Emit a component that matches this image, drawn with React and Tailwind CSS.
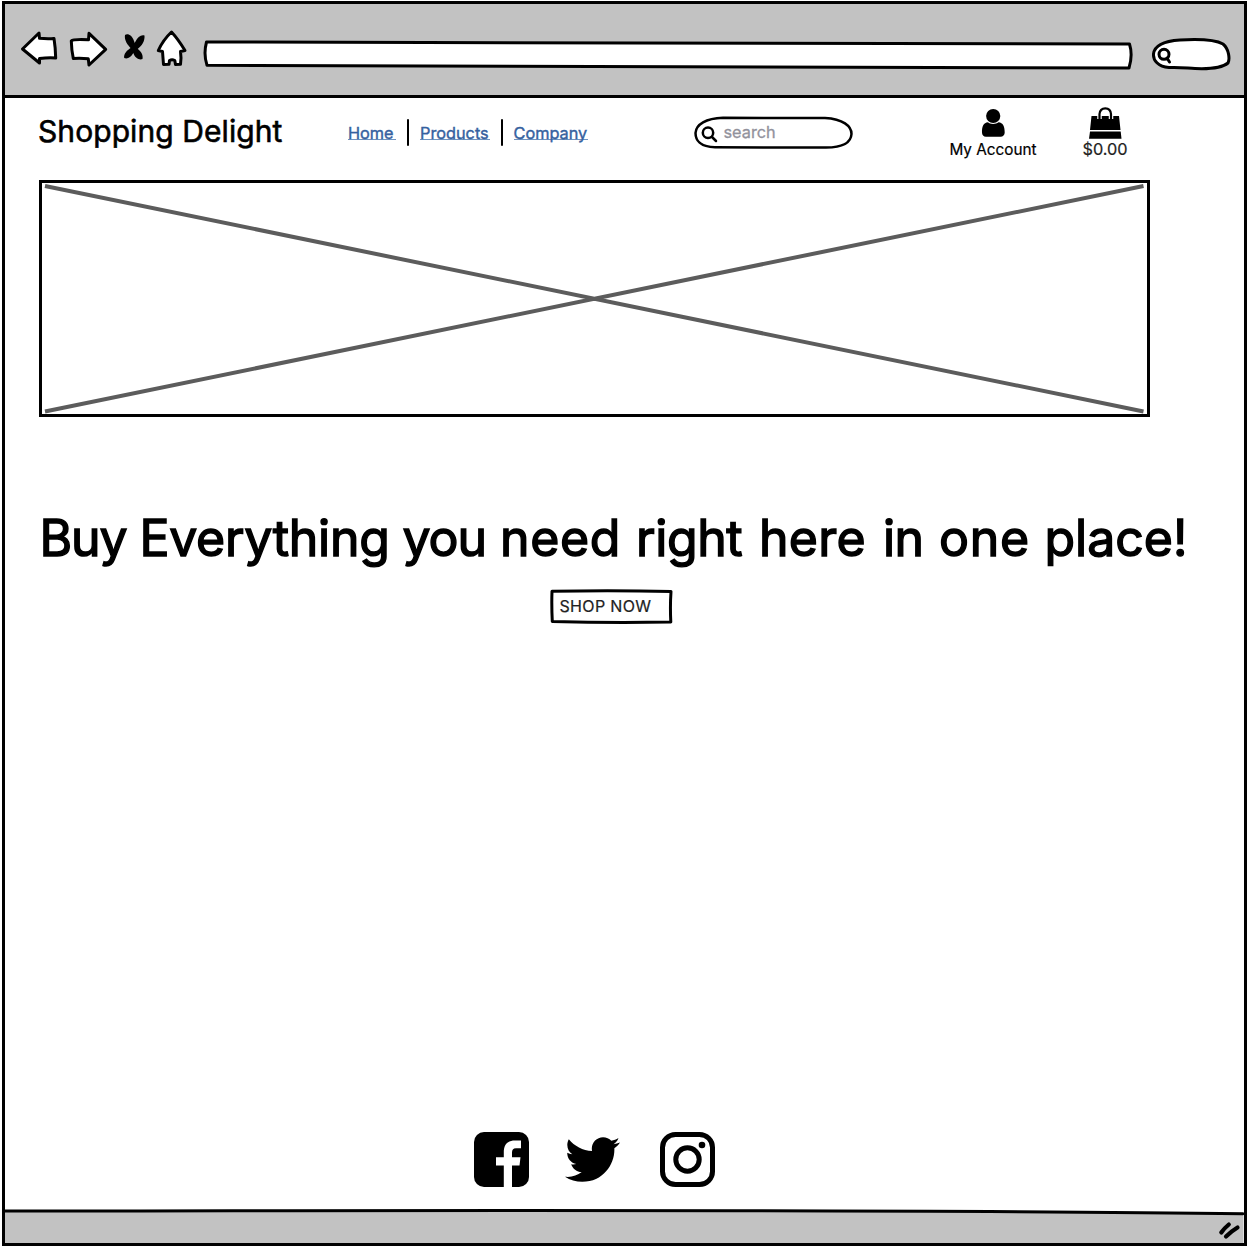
import { FaTwitter } from "react-icons/fa";

function Sketch({ box, className, children }) {
  return (
    <svg viewBox={box} fill="white" stroke="black" strokeWidth="3" strokeLinejoin="round" strokeLinecap="round" className={`block shrink-0 ${className}`}>
      {children}
    </svg>
  );
}

function BrowserBar() {
  return (
    <header className="flex h-[94px] shrink-0 items-start border-b-[3px] border-black bg-[#c2c2c2] pt-6 pl-[15px]">
      <Sketch box="20 28 38 44" className="h-11 w-[38px]">
        <path d="M22.5 49 39 33 39.5 38.3Q47 39 54 38.5 55.5 48 55.7 58Q48 57.5 39.5 58.5V63Z" />
      </Sketch>
      <Sketch box="69 28 39 44" className="ml-[11px] h-11 w-[39px]">
        <path d="M71.3 41Q73 39 88.5 39.8L89 33.3 105.7 49.3 89 65 88.3 58.8Q81 58 73.3 58.5 71.5 50 71.3 41Z" />
      </Sketch>
      <Sketch box="122 28 24 44" className="ml-[14px] h-11 w-6">
        <g fill="black" stroke="none">
          <path d="M125 35C128 33 132.500 36 134 41L136.500 48C140.500 50.500 143.500 54.500 142.500 59C139.500 60.500 135 58 133.500 53.500L131.500 49C127.500 45 124 40 125 35Z" />
          <path d="M144.500 35.500C141 34.500 137.500 37 135.500 41.500L131.500 47.500C127 50 123.500 54 124.200 58C127.500 59.500 131 57 133 53.500L137 49.500C142 46 145 41 144.500 35.500Z" />
        </g>
      </Sketch>
      <Sketch box="156 28 32 44" className="ml-[10px] h-11 w-8">
        <path d="M171.500 32Q178 39 185 50.500L180.500 51.500Q181.500 58 180.500 64.300L175.500 64.500 174.800 60.500Q172 59 169.500 60.500L169 64.300 163.500 64.500Q163 58 162.500 51.500L158.300 50.500Q163 40 171.500 32Z" />
      </Sketch>
      <Sketch box="203 28 930 44" className="ml-[15px] h-11 w-[930px]">
        <path d="M206.500 42Q660 41 1129.500 44 1133 55 1129 68 660 68.500 207 65.300 203.300 54 206.500 42Z" />
      </Sketch>
      <Sketch box="1151 28 80 44" className="ml-[18px] h-11 w-20">
        <path d="M1169 67.500C1158 67 1153 60 1153.500 54C1154.500 45 1165 41 1180 40C1198 39 1216 40 1223 44C1229 49 1230 59 1228 63C1222 68 1207 69 1195 68.500C1186 68 1180 67 1169 67.500Z" />
        <circle cx="1164" cy="54.300" r="5" />
        <path d="M1167 58 1169.500 62" />
      </Sketch>
    </header>
  );
}

function NavLink({ children, className }) {
  return (
    <a href="#" className={`block h-[18px] border-b border-[#6f93c0] text-[16.300px] leading-[22px] text-[#35619f] [-webkit-text-stroke:0.4px] ${className}`}>
      {children}
    </a>
  );
}

function SiteHeader() {
  return (
    <div className="flex h-[82px] shrink-0 items-start pl-[33px]">
      <h1 className="mt-[14.500px] w-[310px] whitespace-nowrap text-[30px] leading-9 tracking-[0.080px] [-webkit-text-stroke:0.6px]">Shopping Delight</h1>
      <nav className="mt-[21px] flex items-start">
        <NavLink className="mt-[3px] w-[48px]">Home</NavLink>
        <span className="ml-[10.500px] h-[27px] w-[2.500px] rounded bg-black" />
        <NavLink className="mt-[3px] ml-[11px] w-[70px]">Products</NavLink>
        <span className="ml-[10.500px] h-[27px] w-[2.500px] rounded bg-black" />
        <NavLink className="mt-[3px] ml-[10.500px] w-[74px]">Company</NavLink>
      </nav>
      <label className="relative mt-[18px] ml-[106.500px] flex h-[33px] w-[159px] items-center">
        <Sketch box="694 116 159 33" className="absolute inset-0 h-[33px] w-[159px]">
          <g strokeWidth="2.500">
            <path d="M723 117.800 825 118C843 119 851.500 126 851.500 134C851 142 843 147.500 826 147.500L715 147.300C700 147 695.500 140 695.500 133C696 124 706 118.500 723 117.800Z" />
            <circle cx="708" cy="132.800" r="5.200" />
            <path d="M712 137 716 141" />
          </g>
        </Sketch>
        <span className="relative -mt-px ml-[29.500px] text-[16.300px] leading-5 text-[#92929c] [-webkit-text-stroke:0.3px]">search</span>
      </label>
      <div className="mt-[9px] ml-[95.500px] flex w-[89px] flex-col items-center">
        <svg viewBox="981 107 24 32" className="h-8 w-6">
          <circle cx="993.200" cy="116" r="7.100" />
          <path d="M988 122.300C990 124.500 996 124.500 998.500 122.300C1003 122.500 1004.800 127 1004.700 132.500C1004.700 135 1003 136.700 1000.500 136.700H986C983.500 136.700 982 135 982 132.500C981.800 127 983.500 122.500 988 122.300Z" />
        </svg>
        <span className="mt-px whitespace-nowrap text-[15.300px] leading-5 [-webkit-text-stroke:0.2px]">My Account</span>
      </div>
      <div className="mt-[9px] ml-[43.500px] flex w-[48px] flex-col items-center">
        <svg viewBox="1089 107 33 32" className="h-8 w-[33px]">
          <path d="M1091.500 116H1119L1120.500 130H1090ZM1090 131.500H1120.700L1121.500 138.700H1089Z" />
          <path d="M1099.500 119V114Q1100 108.300 1105.300 108.300T1111 114V119" fill="none" stroke="white" strokeWidth="4.500" />
          <path d="M1099.500 119V114Q1100 108.300 1105.300 108.300T1111 114V119" fill="none" stroke="black" strokeWidth="2.200" strokeLinecap="round" />
        </svg>
        <span className="text-[16.300px] leading-5 text-[#222] [-webkit-text-stroke:0.2px]">$0.00</span>
      </div>
    </div>
  );
}

function HeroPlaceholder() {
  return (
    <div className="ml-[33.500px] h-[237px] w-[1111.500px] shrink-0 border-[3px] border-black">
      <svg viewBox="42 183 1105 231" preserveAspectRatio="none" className="block h-full w-full" stroke="#5c5c5c" strokeWidth="4">
        <path d="M45 186 1143 411.500M45 411.500 1143 186" />
      </svg>
    </div>
  );
}

function Headline() {
  return (
    <h2 className="mt-[91px] ml-[34.500px] flex h-[60px] shrink-0 whitespace-nowrap text-[50px] leading-[60px] [-webkit-text-stroke:1.400px]">
      <span className="w-[100px] tracking-[-1.200px]">Buy </span>
      <span className="w-[263px] tracking-[-0.300px]">Everything </span>
      <span className="w-[97.500px] tracking-[-1px]">you </span>
      <span className="w-[136px] tracking-[0.600px]">need </span>
      <span className="w-[123px] tracking-[-0.400px]">right </span>
      <span className="w-[124px] tracking-[0.300px]">here </span>
      <span className="w-[56px] tracking-[-0.500px]">in </span>
      <span className="w-[105.500px] tracking-[0.800px]">one </span>
      <span>place!</span>
    </h2>
  );
}

function SocialLinks() {
  return (
    <div className="mt-auto mb-[22px] flex h-[56px] items-start pl-[469px]">
      <svg viewBox="0 0 55 55" className="h-[55px] w-[55px]">
        <rect width="55" height="55" rx="10" />
        <path fill="white" d="M29.800 55V33.500H22V25.200H29.800V20C29.800 12.500 34 8.500 41 8.500H47V16.300H42C39 16.300 38 18 38 20.500V25.200H46.500L45.500 33.500H38V55Z" />
      </svg>
      <FaTwitter className="ml-[36px] h-[55px] w-[55px]" />
      <svg viewBox="0 0 55 55" className="ml-[40px] h-[55px] w-[55px]" fill="none" stroke="black" strokeWidth="5">
        <rect x="2.500" y="2.500" width="50" height="50" rx="13" />
        <circle cx="27.500" cy="27.500" r="11.700" />
        <circle cx="42" cy="13" r="3.300" fill="black" stroke="none" />
      </svg>
    </div>
  );
}

export default function App() {
  return (
    <div className="h-[1258px] w-[1256px] overflow-hidden bg-white pt-px pl-[2px] font-['Inter',sans-serif] text-black">
      <div className="flex h-[1245px] w-[1244.500px] flex-col border-[3px] border-black">
        <BrowserBar />
        <SiteHeader />
        <HeroPlaceholder />
        <Headline />
        <button className="relative mt-[21px] ml-[545px] flex h-[35px] w-[123px] items-center">
          <Sketch box="550 589 123 35" className="absolute inset-0 h-[35px] w-[123px]">
            <path d="M552 591.300Q612 590 671 591.500 670 606 670.800 622 612 623 552.300 621.500 551.500 606 552 591.300Z" />
          </Sketch>
          <span className="relative -mt-px ml-[9.500px] whitespace-nowrap text-base leading-5 tracking-[0.350px] text-[#222] [-webkit-text-stroke:0.2px]">SHOP NOW</span>
        </button>
        <SocialLinks />
        <footer className="relative h-[33px] shrink-0">
          <Sketch box="5 1210 1238.500 33" className="h-[33px] w-full overflow-visible">
            <path fill="#c2c2c2" stroke="none" d="M5 1211Q625 1208 1243.500 1214V1243H5Z" />
            <path fill="none" d="M5 1211C300 1211 900 1208.500 1243 1213.800" />
            <path strokeWidth="4.200" fill="none" d="M1221.300 1232.500Q1224 1228.500 1228.800 1224.500M1226 1236.500Q1231 1231.500 1237.500 1227.500" />
          </Sketch>
        </footer>
      </div>
    </div>
  );
}
